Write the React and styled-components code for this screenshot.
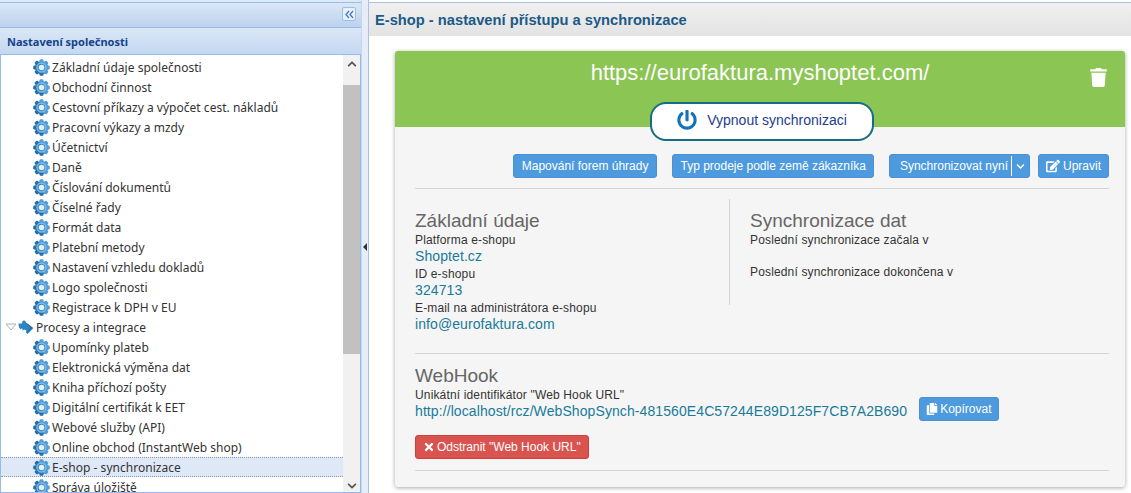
import React from 'react';
import styled, { createGlobalStyle } from 'styled-components';
import { FaTrash, FaPowerOff, FaChevronDown, FaChevronUp, FaEdit, FaCopy, FaTimes } from 'react-icons/fa';

const GlobalStyle = createGlobalStyle`
  html, body { margin: 0; padding: 0; height: 100%; background: #fff; overflow: hidden; }
  * { box-sizing: border-box; }
`;

const Page = styled.div`
  display: flex;
  width: 1131px;
  height: 493px;
  overflow: hidden;
  font-family: "Liberation Sans", Arial, sans-serif;
  background: #fff;
`;

const Sidebar = styled.aside`
  width: 362px;
  flex: none;
  display: flex;
  flex-direction: column;
  padding-top: 2px;
  background: #dfe8f6;
  border-right: 1px solid #c5d6ee;
`;

const CollapseBar = styled.div`
  height: 26px;
  flex: none;
  display: flex;
  justify-content: flex-end;
  align-items: center;
  padding: 0 5px 2px 0;
  background: linear-gradient(#dae7f6, #bcd2ee);
  border-top: 1px solid #99bbe8;
  border-bottom: 1px solid #99bbe8;
`;

const CollapseButton = styled.div`
  width: 14px;
  height: 14px;
  display: flex;
  align-items: center;
  justify-content: center;
  background: #e6f0fb;
  border: 1px solid #9fbde2;
  border-radius: 2px;
`;

const SectionHeader = styled.div`
  height: 27px;
  flex: none;
  display: flex;
  align-items: center;
  padding-left: 7px;
  font-family: "Noto Sans", sans-serif;
  font-size: 11px;
  font-weight: 700;
  color: #15428b;
  background: linear-gradient(#dae7f6, #c3d8f1);
  border-bottom: 1px solid #99bbe8;
`;

const TreeFrame = styled.div`
  flex: 1;
  display: flex;
  min-height: 0;
  background: #fff;
  border: 1px solid #99bbe8;
  border-top: 0;
`;

const TreeList = styled.div`
  flex: 1;
  min-width: 0;
  padding-top: 2px;
  overflow: hidden;
`;

const Row = styled.div`
  height: 20px;
  display: flex;
  align-items: center;
  padding-left: ${({ $parent }) => ($parent ? '4px' : '32px')};
  font-family: "Noto Sans", sans-serif;
  font-size: 12px;
  color: #333;
  white-space: nowrap;
  background: ${({ $selected }) => ($selected ? '#dfe8f6' : 'transparent')};
  border-top: 1px dotted ${({ $selected }) => ($selected ? '#8a99ad' : 'transparent')};
  border-bottom: 1px dotted ${({ $selected }) => ($selected ? '#8a99ad' : 'transparent')};
`;

const RowLabel = styled.span`
  margin-left: 2px;
  letter-spacing: 0.02px;
`;

const ScrollBar = styled.div`
  width: 17px;
  flex: none;
  display: flex;
  flex-direction: column;
  align-items: center;
  background: #f1f1f1;
  color: #505050;
`;

const ScrollEnd = styled.div`
  height: 17px;
  flex: none;
  display: flex;
  align-items: center;
  justify-content: center;
`;

const ScrollGap = styled.div`
  height: ${({ $h }) => $h}px;
  flex: none;
`;

const ScrollThumb = styled.div`
  width: 100%;
  height: 269px;
  flex: none;
  background: #c1c1c1;
`;

const Splitter = styled.div`
  width: 7px;
  flex: none;
  display: flex;
  align-items: center;
  justify-content: center;
  background: #e6edf8;
  border-right: 1px solid #a9c2e3;
`;

const Main = styled.main`
  flex: 1;
  min-width: 0;
  display: flex;
  flex-direction: column;
  padding-top: 2px;
`;

const TitleBar = styled.div`
  height: 34px;
  flex: none;
  display: flex;
  align-items: center;
  padding-left: 6px;
  font-size: 14.7px;
  font-weight: 700;
  color: #1b5a87;
  background: linear-gradient(#f0f0f0, #e3e3e3);
  border-top: 1px solid #a9c2e3;
`;

const Content = styled.div`
  flex: 1;
  padding: 15px 6px 0 26px;
`;

const Card = styled.section`
  background: #f5f5f5;
  border-radius: 3px;
  box-shadow: 0 1px 4px rgba(0, 0, 0, 0.35);
  height: 436px;
`;

const CardHead = styled.div`
  position: relative;
  height: 76px;
  padding-top: 10px;
  background: #8bc553;
  border-radius: 3px 3px 0 0;
  text-align: center;
  font-size: 22px;
  line-height: 24px;
  color: #fff;
`;

const TrashIcon = styled.div`
  position: absolute;
  top: 17px;
  right: 17px;
  font-size: 19px;
  line-height: 19px;
`;

const PowerToggle = styled.button`
  position: absolute;
  left: 255px;
  top: 51px;
  width: 224px;
  height: 39px;
  display: flex;
  align-items: center;
  justify-content: center;
  gap: 10px;
  padding: 0 0 4px;
  background: #fff;
  border: 2px solid #156d85;
  border-radius: 16px;
  font-family: inherit;
  font-size: 14px;
  color: #23408e;
  svg { color: #1272bd; font-size: 20px; }
`;

const CardBody = styled.div`
  padding: 27px 16px 0 20px;
`;

const Actions = styled.div`
  display: flex;
  justify-content: flex-end;
  gap: 15px;
  margin-bottom: 10px;
`;

const ActionGroup = styled.div`
  display: flex;
  gap: 8px;
`;

const Btn = styled.button`
  height: 24px;
  display: inline-flex;
  align-items: center;
  gap: ${({ $gap }) => $gap || 0}px;
  padding: 0 ${({ $pad }) => $pad || 8}px;
  color: #fff;
  font-family: inherit;
  font-size: 12px;
  white-space: nowrap;
  background: ${({ $danger }) => ($danger ? '#d9534f' : '#4d9ade')};
  border: 1px solid ${({ $danger }) => ($danger ? '#d43f3a' : '#4a90d2')};
  border-radius: 3px;
`;

const CopyBtn = styled(Btn)`
  margin-top: -6px;
`;

const SplitBtn = styled(Btn)`
  padding: 0;
`;

const SplitMain = styled.span`
  padding: 0 3px 0 10px;
  line-height: 20px;
  border-right: 1px solid #fff;
`;

const SplitCaret = styled.span`
  width: 17px;
  display: flex;
  justify-content: center;
  font-size: 9px;
`;

const Rule = styled.hr`
  margin: 0;
  border: 0;
  border-top: 1px solid #d4d4d4;
`;

const Columns = styled.div`
  display: flex;
  padding-top: 10px;
  height: 164px;
`;

const LeftCol = styled.div`
  width: 315px;
  flex: none;
  height: 106px;
  padding-top: 10px;
  border-right: 1px solid #d4d4d4;
`;

const RightCol = styled.div`
  padding: 10px 0 0 20px;
`;

const Heading = styled.h3`
  margin: 0 0 1px;
  font-size: 19px;
  font-weight: 400;
  line-height: 23px;
  color: #666;
`;

const Label = styled.div`
  font-size: 12px;
  line-height: 15px;
  letter-spacing: 0.15px;
  white-space: nowrap;
  color: #333;
  margin-bottom: ${({ $gap }) => $gap || 0}px;
`;

const Value = styled.div`
  font-size: 14px;
  line-height: 17px;
  padding-bottom: 2px;
  letter-spacing: 0.09px;
  white-space: nowrap;
  color: #1a7a9a;
`;

const LinkValue = styled(Value)`
  padding-bottom: 0;
  line-height: 19px;
`;

const WebHook = styled.div`
  padding-top: 10px;
  height: 116px;
`;

const LinkRow = styled.div`
  display: flex;
  align-items: center;
  gap: 12px;
  height: 17px;
  margin-bottom: 15px;
`;

const ExpandArrow = () => (
  <svg width="13" height="10" viewBox="0 0 13 10">
    <path d="M1 2h10L6 8z" fill="#fff" stroke="#a9b4c0" />
  </svg>
);

const GearIcon = () => (
  <svg width="17" height="17" viewBox="0 0 17 17">
    <defs>
      <linearGradient id="gearFill" x1="0" y1="0" x2="0" y2="1">
        <stop offset="0" stopColor="#58a3dc" />
        <stop offset="1" stopColor="#1d6aa8" />
      </linearGradient>
    </defs>
    <g fill="url(#gearFill)">
      <circle cx="8.5" cy="8.5" r="6.6" />
      {[0, 45, 90, 135].map(a => (
        <rect key={a} x="6.5" y="0.2" width="4" height="16.6" rx="1.2" transform={`rotate(${a} 8.5 8.5)`} />
      ))}
    </g>
    <circle cx="8.5" cy="8.5" r="4.5" fill="none" stroke="#7fbce8" strokeWidth="1.4" />
    <circle cx="8.5" cy="8.5" r="2.8" fill="#e4f0f8" />
  </svg>
);

const PuzzleIcon = () => (
  <svg width="16" height="15" viewBox="0 0 16 15">
    <path
      d="M0.5 3.5H4.2C3.8 1.6 4.6 0.4 6 0.4S8.2 1.5 7.9 2.6L15.5 8 9.5 14 8 12.6C8.8 11.4 8.2 10.2 7 9.8 5.9 9.5 5 10 4.6 10.6L4.2 8.2 2.4 9.2C1.2 8.2 0.5 6 0.5 3.5Z"
      fill="#2d86c4"
    />
    <path d="M9 3.5 13.5 8 9 12.5" fill="none" stroke="#1c5f94" strokeWidth="1" />
  </svg>
);

const DoubleChevron = () => (
  <svg width="9" height="9" viewBox="0 0 9 9" fill="none" stroke="#4a7ab5" strokeWidth="1.3">
    <path d="M4 1 1 4.5 4 8M8 1 5 4.5 8 8" />
  </svg>
);

const treeItems = [
  { label: 'Základní údaje společnosti' },
  { label: 'Obchodní činnost' },
  { label: 'Cestovní příkazy a výpočet cest. nákladů' },
  { label: 'Pracovní výkazy a mzdy' },
  { label: 'Účetnictví' },
  { label: 'Daně' },
  { label: 'Číslování dokumentů' },
  { label: 'Číselné řady' },
  { label: 'Formát data' },
  { label: 'Platební metody' },
  { label: 'Nastavení vzhledu dokladů' },
  { label: 'Logo společnosti' },
  { label: 'Registrace k DPH v EU' },
  { label: 'Procesy a integrace', parent: true },
  { label: 'Upomínky plateb' },
  { label: 'Elektronická výměna dat' },
  { label: 'Kniha příchozí pošty' },
  { label: 'Digitální certifikát k EET' },
  { label: 'Webové služby (API)' },
  { label: 'Online obchod (InstantWeb shop)' },
  { label: 'E-shop - synchronizace', selected: true },
  { label: 'Správa úložiště' },
];

const App = () => (
  <Page>
    <GlobalStyle />
    <Sidebar>
      <CollapseBar>
        <CollapseButton><DoubleChevron /></CollapseButton>
      </CollapseBar>
      <SectionHeader>Nastavení společnosti</SectionHeader>
      <TreeFrame>
        <TreeList>
          {treeItems.map(item => (
            <Row key={item.label} $parent={item.parent} $selected={item.selected}>
              {item.parent ? <><ExpandArrow /><PuzzleIcon /></> : <GearIcon />}
              <RowLabel>{item.label}</RowLabel>
            </Row>
          ))}
        </TreeList>
        <ScrollBar>
          <ScrollEnd><FaChevronUp size={10} /></ScrollEnd>
          <ScrollGap $h={13} />
          <ScrollThumb />
          <ScrollGap $h={123} />
          <ScrollEnd><FaChevronDown size={10} /></ScrollEnd>
        </ScrollBar>
      </TreeFrame>
    </Sidebar>
    <Splitter>
      <svg width="4" height="8" viewBox="0 0 4 8"><path d="M4 0v8L0 4z" fill="#333" /></svg>
    </Splitter>
    <Main>
      <TitleBar>E-shop - nastavení přístupu a synchronizace</TitleBar>
      <Content>
        <Card>
          <CardHead>
            https://eurofaktura.myshoptet.com/
            <TrashIcon><FaTrash /></TrashIcon>
            <PowerToggle><FaPowerOff />Vypnout synchronizaci</PowerToggle>
          </CardHead>
          <CardBody>
            <Actions>
              <Btn>Mapování forem úhrady</Btn>
              <Btn $pad={7}>Typ prodeje podle země zákazníka</Btn>
              <ActionGroup>
                <SplitBtn>
                  <SplitMain>Synchronizovat nyní</SplitMain>
                  <SplitCaret><FaChevronDown /></SplitCaret>
                </SplitBtn>
                <Btn $pad={7} $gap={3}><FaEdit size={14} />Upravit</Btn>
              </ActionGroup>
            </Actions>
            <Rule />
            <Columns>
              <LeftCol>
                <Heading>Základní údaje</Heading>
                <Label>Platforma e-shopu</Label>
                <Value>Shoptet.cz</Value>
                <Label>ID e-shopu</Label>
                <Value>324713</Value>
                <Label>E-mail na administrátora e-shopu</Label>
                <Value>info@eurofaktura.com</Value>
              </LeftCol>
              <RightCol>
                <Heading>Synchronizace dat</Heading>
                <Label $gap={17}>Poslední synchronizace začala v</Label>
                <Label>Poslední synchronizace dokončena v</Label>
              </RightCol>
            </Columns>
            <Rule />
            <WebHook>
              <Heading>WebHook</Heading>
              <Label>Unikátní identifikátor "Web Hook URL"</Label>
              <LinkRow>
                <LinkValue>http://localhost/rcz/WebShopSynch-481560E4C57244E89D125F7CB7A2B690</LinkValue>
                <CopyBtn $pad={6} $gap={2}><FaCopy size={12} />Kopírovat</CopyBtn>
              </LinkRow>
              <Btn $danger $pad={7} $gap={2}><FaTimes size={12} />Odstranit "Web Hook URL"</Btn>
            </WebHook>
            <Rule />
          </CardBody>
        </Card>
      </Content>
    </Main>
  </Page>
);

export default App;
